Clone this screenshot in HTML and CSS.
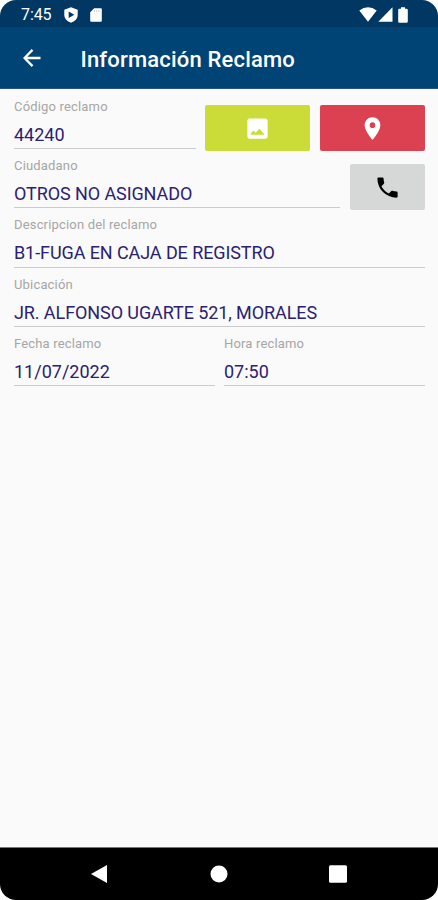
FILE: index.html
```html
<!DOCTYPE html>
<html lang="es">
<head>
<meta charset="utf-8">
<title>Información Reclamo</title>
<link rel="stylesheet" href="styles.css">
</head>
<body>
<main class="phone">
  <header class="status">
    <span class="clock">7:45</span>
    <svg class="shield" viewBox="0 0 14 16"><path fill="#fff" d="M7 .3 13.700 2.700V8c0 3.500-2.700 6.300-6.700 7.700C3 14.300.3 11.500.3 8V2.700z"/><path fill="#003863" d="M4.700 4.500v6.400L10.300 7.700z"/></svg>
    <svg class="card" viewBox="0 0 12 14"><path fill="#fff" d="M4.200.3h6.600q1 0 1 1v11.400q0 1-1 1H1.200q-1 0-1-1V4.300z"/><path stroke="#003863" stroke-width=".7" d="M4.500 2.200v2M6.700 2.200v2M8.900 2.200v2" opacity=".35"/></svg>
    <span class="signals">
      <svg width="18" height="15" viewBox="0 0 18 15"><path fill="#fff" d="M.3 3.500Q9-3.200 17.700 3.500L9 14.700z"/></svg>
      <svg width="15" height="15" viewBox="0 0 15 15"><path fill="#fff" d="M14.500.3v14.400H.3z"/></svg>
      <svg class="battery" width="10" height="16" viewBox="0 0 10 16"><path fill="#fff" d="M3 .2h4v1.600h1.600q1.200 0 1.200 1.200v11.500q0 1.200-1.200 1.200H1.400q-1.200 0-1.200-1.200V3q0-1.200 1.200-1.200H3z"/></svg>
    </span>
  </header>
  <nav class="appbar">
    <svg class="back" viewBox="0 0 18 18"><path fill="none" stroke="#fff" stroke-width="2.300" d="M17.500 9H1.500M9.500.9 1.500 9l8 8.100"/></svg>
    <h1>Información Reclamo</h1>
  </nav>
  <section class="form">
    <div class="row">
      <div class="field"><label>Código reclamo</label><span class="value number">44240</span></div>
      <button class="btn lime" aria-label="Imagen"><svg width="27" height="27" viewBox="0 0 24 24"><path fill="#fff" d="M21 19V5c0-1.100-.9-2-2-2H5c-1.100 0-2 .9-2 2v14c0 1.100.9 2 2 2h14c1.100 0 2-.9 2-2zM6 17.500v-1l2.300-2.800 2 2 3.400-3.500 2.300 2.600 2 2.200v.5z"/></svg></button>
      <button class="btn red" aria-label="Mapa"><svg width="27" height="27" viewBox="0 0 24 24"><path fill="#fff" d="M12 2C8.130 2 5 5.130 5 9c0 5.250 7 13 7 13s7-7.750 7-13c0-3.870-3.130-7-7-7zm0 9.500a2.500 2.500 0 0 1 0-5 2.500 2.500 0 0 1 0 5z"/></svg></button>
    </div>
    <div class="row">
      <div class="field"><label>Ciudadano</label><span class="value">OTROS NO ASIGNADO</span></div>
      <button class="btn gray" aria-label="Llamar"><svg width="27" height="27" viewBox="0 0 24 24"><path d="M6.620 10.790c1.440 2.830 3.760 5.140 6.590 6.590l2.200-2.200c.27-.27.670-.36 1.020-.24 1.120.37 2.330.57 3.570.57.550 0 1 .450 1 1V20c0 .550-.450 1-1 1-9.390 0-17-7.610-17-17 0-.550.450-1 1-1h3.500c.550 0 1 .450 1 1 0 1.250.2 2.450.57 3.570.11.350.03.740-.25 1.020z"/></svg></button>
    </div>
    <div class="row">
      <div class="field"><label>Descripcion del reclamo</label><span class="value">B1-FUGA EN CAJA DE REGISTRO</span></div>
    </div>
    <div class="row">
      <div class="field"><label>Ubicación</label><span class="value">JR. ALFONSO UGARTE 521, MORALES</span></div>
    </div>
    <div class="row">
      <div class="field"><label>Fecha reclamo</label><span class="value number">11/07/2022</span></div>
      <div class="field"><label>Hora reclamo</label><span class="value number">07:50</span></div>
    </div>
  </section>
  <footer class="navbar">
    <svg viewBox="0 0 18 20"><path fill="#fff" d="M17 1v18L1 10z"/></svg>
    <svg viewBox="0 0 18 20"><circle cx="9" cy="10" r="8.500" fill="#fff"/></svg>
    <svg viewBox="0 0 18 20"><rect y="1.200" width="18" height="17.600" rx="1.500" fill="#fff"/></svg>
  </footer>
</main>
</body>
</html>
```
FILE: styles.css
```css
* { box-sizing: border-box; }
body { margin: 0; background: #fff; font-family: Roboto, sans-serif; }
.phone { width: 438px; height: 900px; display: flex; flex-direction: column; overflow: hidden; border-radius: 16px; background: #fafafa; }
.status { height: 27px; flex: none; display: flex; align-items: center; padding: 2px 30px 0 21px; background: #003863; color: #fff; }
.clock { width: 43px; font-size: 16px; line-height: 20px; letter-spacing: -.1px; }
.shield { width: 14px; height: 16px; }
.card { width: 12px; height: 14px; margin-left: 12px; }
.signals { margin-left: auto; display: flex; align-items: center; gap: 1px; }
.battery { margin-left: 4px; }
.appbar { height: 62px; flex: none; display: flex; align-items: center; padding-left: 23px; background: #004475; border-bottom: 1px solid #245580; color: #fff; }
.back { width: 18px; height: 18px; }
h1 { margin: 4px 0 0 39.500px; font-size: 22px; line-height: 28px; font-weight: 500; letter-spacing: .18px; white-space: nowrap; }
.form { flex: 1; display: flex; flex-direction: column; padding: 0 13.500px 0 14px; }
.row { display: flex; gap: 9.500px; height: 59.200px; flex: none; }
.field { flex: 1; display: flex; flex-direction: column; padding-top: 10px; margin-bottom: -1px; border-bottom: 1.500px solid #cbcbcb; white-space: nowrap; min-width: 0; }
label { font-size: 13px; line-height: 16px; letter-spacing: .17px; color: #a6a6a6; }
.value { margin-top: 9px; font-size: 18px; line-height: 22px; letter-spacing: -.09px; color: #2a2173; }
.number { letter-spacing: 0; }
.btn { flex: none; display: flex; align-items: center; justify-content: center; width: 105px; height: 46px; margin: 16px 0 0; padding: 0; border: 0; border-radius: 2px; }
.lime { background: #cbdc38; }
.red { background: #db4150; }
.gray { width: 75px; background: #d6d7d7; }
.navbar { height: 53px; flex: none; display: flex; align-items: center; justify-content: space-between; padding: 0 91px 0 90px; background: #000; border-top: 1px solid #777; }
.navbar svg { width: 18px; height: 20px; }
```
